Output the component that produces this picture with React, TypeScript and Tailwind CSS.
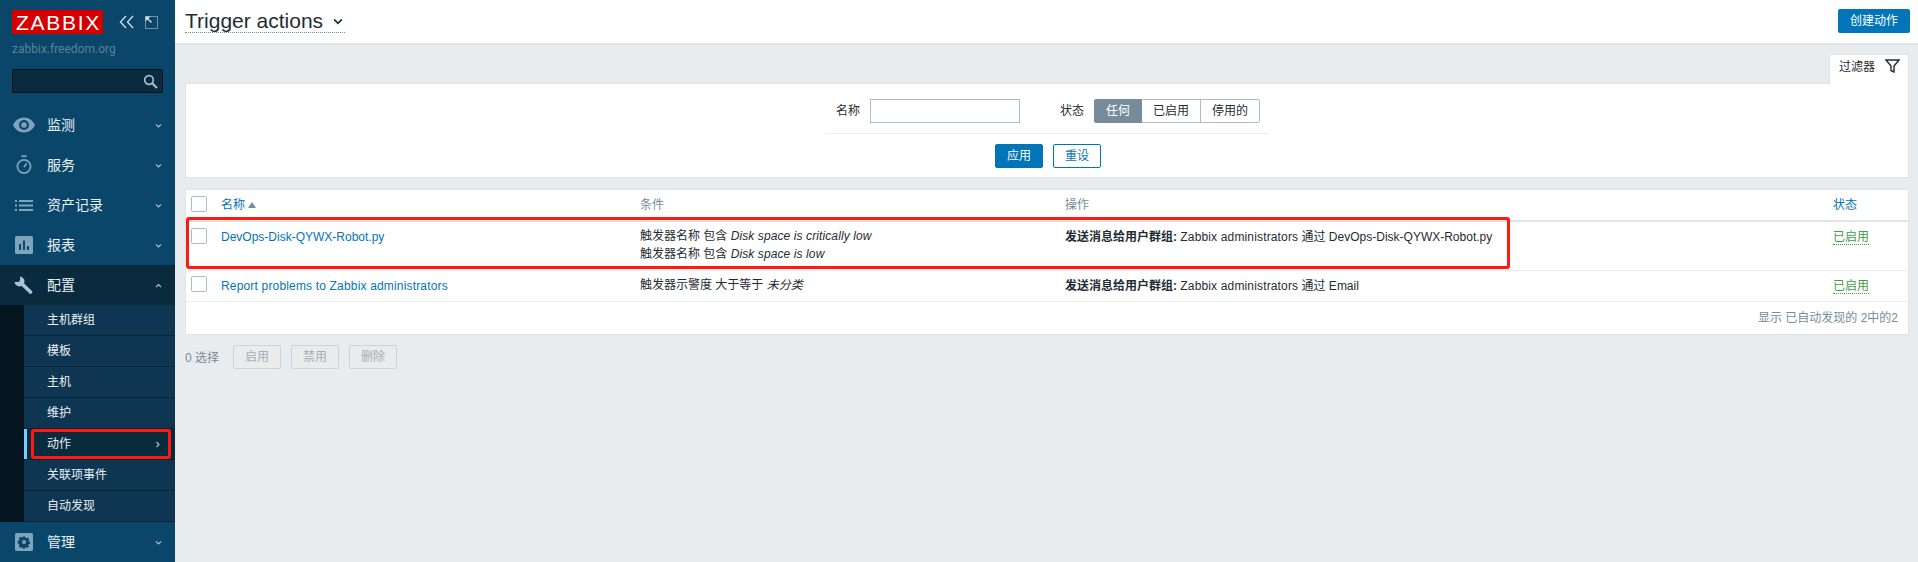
import type { ReactNode } from 'react'

const SANS = 'font-["Liberation_Sans","Noto_Sans_CJK_SC",sans-serif]'

// Small chevrons used all over the side menu
function Chevron({ dir = 'down', className = '' }: { dir?: 'down' | 'up' | 'right'; className?: string }) {
  const d = dir === 'down' ? 'M2 3.500 L4.500 6 L7 3.500' : dir === 'up' ? 'M2 6 L4.500 3.500 L7 6' : 'M3.500 2 L6 4.500 L3.500 7'
  return (
    <svg width="9" height="9" viewBox="0 0 9 9" fill="none" stroke="currentColor" strokeWidth="1.100" className={className}>
      <path d={d} />
    </svg>
  )
}

function EyeIcon() {
  return (
    <svg width="22" height="16" viewBox="0 0 22 16">
      <path fillRule="evenodd" fill="#7ea4bc" d="M11 0.5C6 0.5 2 3.6 0 8c2 4.4 6 7.5 11 7.5S20 12.4 22 8C20 3.6 16 0.5 11 0.5zM11 13a5 5 0 1 1 0-10 5 5 0 0 1 0 10z" />
      <circle cx="11" cy="8" r="2.8" fill="#7ea4bc" />
    </svg>
  )
}

function TimerIcon() {
  return (
    <svg width="16" height="20" viewBox="0 0 16 20" fill="none" stroke="#7ea4bc">
      <circle cx="8" cy="11.5" r="6.6" strokeWidth="1.8" />
      <path d="M5.5 1.2h5" strokeWidth="1.8" />
      <path d="M8 12 L10.5 8.5" strokeWidth="1.8" />
    </svg>
  )
}

function ListIcon() {
  return (
    <svg width="18" height="11" viewBox="0 0 18 11" fill="#7ea4bc">
      <rect x="0" y="0" width="2" height="2" />
      <rect x="4" y="0" width="14" height="2" />
      <rect x="0" y="4.5" width="2" height="2" />
      <rect x="4" y="4.5" width="14" height="2" />
      <rect x="0" y="9" width="2" height="2" />
      <rect x="4" y="9" width="14" height="2" />
    </svg>
  )
}

function ChartIcon() {
  return (
    <svg width="18" height="18" viewBox="0 0 18 18">
      <rect width="18" height="18" rx="1.5" fill="#7ea4bc" />
      <rect x="4" y="8" width="2" height="6" fill="#0a466a" />
      <rect x="8" y="4.5" width="2" height="9.5" fill="#0a466a" />
      <rect x="12" y="10" width="2" height="4" fill="#0a466a" />
    </svg>
  )
}

function WrenchIcon() {
  return (
    <svg width="19" height="19" viewBox="0 0 19 19">
      <path d="M6.500 6.500 L16.500 16" stroke="#a5c6da" strokeWidth="3.600" strokeLinecap="round" />
      <circle cx="5.500" cy="5.500" r="5" fill="#a5c6da" />
      <path d="M-1 -1 L6 -1 L6.200 3 L5.500 5.500 L3 6 L-1 6 Z" fill="#0a2a3d" />
    </svg>
  )
}

function GearIcon() {
  return (
    <svg width="18" height="18" viewBox="0 0 18 18">
      <rect width="18" height="18" rx="1.5" fill="#7ea4bc" />
      <path
        fill="#0a466a"
        fillRule="evenodd"
        d="M7.6 3h2.8l.3 1.7 1.2.5 1.4-1 2 2-1 1.4.5 1.2 1.2.2v2.8l-1.7.3-.5 1.2 1 1.4-2 2-1.4-1-1.2.5-.3 1.2H7.6l-.3-1.2-1.2-.5-1.4 1-2-2 1-1.4-.5-1.2L1.500 11V8.200l1.700-.3.5-1.200-1-1.400 2-2 1.400 1 1.200-.5zM9 7.200a2.300 2.300 0 1 0 0 4.600 2.300 2.300 0 0 0 0-4.600z"
        transform="translate(1.4 0.9) scale(0.85)"
      />
    </svg>
  )
}

function MenuItem({ icon, label, open }: { icon: ReactNode; label: string; open?: boolean }) {
  return (
    <div className={`flex h-10 items-center text-[14px] text-[#e8f0f5] ${open ? 'bg-[#0a2a3d]' : ''}`}>
      <div className="flex w-[47px] justify-center">{icon}</div>
      <span className="flex-1">{label}</span>
      <Chevron dir={open ? 'up' : 'down'} className="mr-[12px] mt-[1px] text-[#a9c4d4]" />
    </div>
  )
}

function SubItem({ label, active }: { label: string; active?: boolean }) {
  return (
    <div className="flex h-[31px] border-b border-[#092536] bg-[#0e3552]">
      <div className={`w-[3px] ${active ? 'bg-[#7fcbff]' : ''}`} />
      <div className={`flex flex-1 items-center pl-[20px] pr-[13px] text-[12px] text-[#e8f0f5] ${active ? 'bg-[#0a2a3d]' : ''}`}>
        <span className="flex-1">{label}</span>
        {active && <Chevron dir="right" className="text-[#a9c4d4]" />}
      </div>
    </div>
  )
}

function Sidebar() {
  return (
    <aside className="relative flex h-[562px] w-[175px] shrink-0 flex-col bg-[#0a466a]">
      <div className="flex h-[44px] items-start pl-[12px] pt-[10px]">
        <div className="flex h-[24px] w-[91px] items-center justify-center bg-[#d40000] pl-[2px] font-['Liberation_Sans',sans-serif] text-[21px] leading-none tracking-[1.700px] text-white">
          ZABBIX
        </div>
        <svg width="16" height="14" viewBox="0 0 16 14" fill="none" stroke="#d5e1e9" strokeWidth="1.300" className="ml-[16px] mt-[5px]">
          <path d="M7 1 L1.500 7 L7 13" />
          <path d="M14 1 L8.500 7 L14 13" />
        </svg>
        <svg width="13" height="13" viewBox="0 0 13 13" className="ml-[10px] mt-[6px]">
          <rect x="0.500" y="0.500" width="12" height="12" fill="none" stroke="#d5e1e9" strokeDasharray="1 1" />
          <path d="M0.500 0.500h5L0.500 5.500z" fill="#d5e1e9" />
          <path d="M2 2 L6.500 6.500" stroke="#d5e1e9" strokeWidth="1.400" />
        </svg>
      </div>
      <div className="h-[26px] pl-[12px] font-['Roboto',sans-serif] text-[12px] leading-[10px] text-[#5c8199]">zabbix.freedom.org</div>
      <div className="mx-[12px] flex h-[24px] items-center justify-end rounded-[2px] border border-[#05131c] bg-[#0a2a3d] pr-[4px]">
        <svg width="15" height="15" viewBox="0 0 15 15" fill="none" stroke="#a5bdcc" strokeWidth="1.7">
          <circle cx="6" cy="6" r="4.300" />
          <path d="M9.200 9.200 L14 14" strokeWidth="2.200" />
        </svg>
      </div>
      <div className="mt-[12px] flex flex-col">
        <MenuItem icon={<EyeIcon />} label="监测" />
        <MenuItem icon={<TimerIcon />} label="服务" />
        <MenuItem icon={<ListIcon />} label="资产记录" />
        <MenuItem icon={<ChartIcon />} label="报表" />
        <MenuItem icon={<WrenchIcon />} label="配置" open />
        <div className="bg-[#04151f] pl-[24px]">
          <SubItem label="主机群组" />
          <SubItem label="模板" />
          <SubItem label="主机" />
          <SubItem label="维护" />
          <SubItem label="动作" active />
          <SubItem label="关联项事件" />
          <SubItem label="自动发现" />
        </div>
        <MenuItem icon={<GearIcon />} label="管理" />
      </div>
      {/* red annotation around the active item */}
      <div className="absolute left-[31px] top-[429px] h-[30px] w-[140px] rounded-[3px] border-[3px] border-[#ff1a10]" />
    </aside>
  )
}

function Btn({ children, outline, disabled, className = '' }: { children: ReactNode; outline?: boolean; disabled?: boolean; className?: string }) {
  const look = disabled
    ? 'border-[#cdd3d8] bg-[#e9ebed] text-[#a5afb6]'
    : outline
      ? 'border-[#0275b8] bg-white text-[#0275b8]'
      : 'border-[#0275b8] bg-[#0275b8] text-white'
  return <div className={`flex h-[24px] w-[48px] items-center justify-center rounded-[2px] border text-[12px] ${look} ${className}`}>{children}</div>
}

function Checkbox() {
  return <div className="h-[16px] w-[16px] rounded-[2px] border border-[#acbbc5] bg-white" />
}

const rowGrid = 'grid grid-cols-[35px_419px_425px_768px_1fr]'

function FilterPanel() {
  return (
    <div className="mt-[9px] flex flex-col items-end">
      <div className="relative z-10 mb-[-1px] flex h-[30px] w-[80px] items-center gap-[10px] rounded-t-[2px] border border-b-0 border-[#dfe4e7] bg-white pb-[5px] pl-[9px] text-[12px] text-[#1f2c33]">
        过滤器
        <svg width="15" height="14" viewBox="0 0 15 14" fill="none" stroke="#1f2c33" strokeWidth="1.400" className="mt-[-3px]">
          <path d="M1 1 H14 L9 7 V13 L6 11.500 V7 Z" />
        </svg>
      </div>
      <div className="h-[95px] w-full border border-[#dfe4e7] bg-white">
        <div className="flex h-[49px] pl-[640px] pt-[15px]">
          <div className="flex h-[24px] w-[44px] items-center justify-end pr-[10px] text-[12px] text-[#1f2c33]">名称</div>
          <div className="h-[24px] w-[150px] border border-[#acbbc5] bg-white" />
          <div className="flex h-[24px] w-[74px] items-center justify-end pr-[10px] text-[12px] text-[#1f2c33]">状态</div>
          <div className="flex h-[24px] text-[12px] text-[#1f2c33]">
            <div className="flex w-[48px] items-center justify-center rounded-l-[2px] border border-[#768d99] bg-[#768d99] text-white">任何</div>
            <div className="flex w-[59px] items-center justify-center border-y border-r border-[#acbbc5]">已启用</div>
            <div className="flex w-[59px] items-center justify-center rounded-r-[2px] border-y border-r border-[#acbbc5]">停用的</div>
          </div>
        </div>
        <div className="ml-[640px] h-px w-[443px] bg-[#ebeef0]" />
        <div className="mt-[10px] flex gap-[10px] pl-[809px]">
          <Btn>应用</Btn>
          <Btn outline>重设</Btn>
        </div>
      </div>
    </div>
  )
}

function ActionsTable() {
  return (
    <div className="mt-[11px] border border-[#dfe4e7] bg-white text-[12px] text-[#1f2c33]">
      <div className={`${rowGrid} h-[32px] border-b-[2px] border-[#dfe4e7] text-[#768d99]`}>
        <div className="pl-[5px] pt-[6px]"><Checkbox /></div>
        <div className="flex items-center gap-[3px] text-[#0275b8]">
          名称
          <svg width="8" height="6" viewBox="0 0 8 6" fill="#768d99"><path d="M4 0 L8 6 H0 Z" /></svg>
        </div>
        <div className="flex items-center">条件</div>
        <div className="flex items-center">操作</div>
        <div className="flex items-center text-[#0275b8]">状态</div>
      </div>
      <div className={`${rowGrid} h-[49px] border-b border-[#ebeef0]`}>
        <div className="pl-[5px] pt-[6px]"><Checkbox /></div>
        <div className="pt-[6px] text-[#0275b8]">DevOps-Disk-QYWX-Robot.py</div>
        <div className="pt-[5px] leading-[18px]">
          <div>触发器名称 包含 <i className="tracking-[0.1px]">Disk space is critically low</i></div>
          <div>触发器名称 包含 <i className="tracking-[0.1px]">Disk space is low</i></div>
        </div>
        <div className="pt-[6px]"><b>发送消息给用户群组:</b> <span className="tracking-[0.15px]">Zabbix administrators</span> 通过 DevOps-Disk-QYWX-Robot.py</div>
        <div className="pt-[6px]"><span className="border-b border-dotted border-[#429e47] text-[#429e47]">已启用</span></div>
      </div>
      <div className={`${rowGrid} h-[31px] border-b border-[#ebeef0]`}>
        <div className="pl-[5px] pt-[5px]"><Checkbox /></div>
        <div className="pt-[6px] tracking-[0.17px] text-[#0275b8]">Report problems to Zabbix administrators</div>
        <div className="pt-[5px]">触发器示警度 大于等于 <i>未分类</i></div>
        <div className="pt-[6px]"><b>发送消息给用户群组:</b> <span className="tracking-[0.15px]">Zabbix administrators</span> 通过 Email</div>
        <div className="pt-[6px]"><span className="border-b border-dotted border-[#429e47] text-[#429e47]">已启用</span></div>
      </div>
      <div className="flex h-[32px] items-center justify-end pr-[10px] text-[#768d99]">显示 已自动发现的 2中的2</div>
    </div>
  )
}

export default function App() {
  return (
    <div className={`relative flex h-[562px] w-[1918px] overflow-hidden bg-[#e9ecef] ${SANS}`}>
      <Sidebar />
      <main className="flex min-w-0 flex-1 flex-col">
        <header className="flex h-[45px] items-start justify-between border-b-[2px] border-[#dfe4e7] bg-white pl-[10px] pr-[8px]">
          <div className="mt-[9px] flex h-[24px] items-center gap-[8px] border-b border-dotted border-[#768d99] text-[21px] leading-none text-[#1f2c33]">
            Trigger actions
            <Chevron className="h-[14px] w-[14px]" />
          </div>
          <div className="mt-[9px] flex h-[24px] w-[72px] items-center justify-center rounded-[2px] bg-[#0275b8] text-[12px] text-white">创建动作</div>
        </header>
        <div className="pl-[10px] pr-[9px]">
          <FilterPanel />
          <ActionsTable />
          <div className="mt-[10px] flex items-center text-[12px] text-[#768d99]">
            <span className="w-[48px] pt-[1px]">0 选择</span>
            <div className="flex gap-[10px]">
              <Btn disabled>启用</Btn>
              <Btn disabled>禁用</Btn>
              <Btn disabled>删除</Btn>
            </div>
          </div>
        </div>
      </main>
      {/* red annotation around the first table row */}
      <div className="absolute left-[186px] top-[217px] h-[52px] w-[1324px] rounded-[3px] border-[3px] border-[#ff1a10]" />
    </div>
  )
}
